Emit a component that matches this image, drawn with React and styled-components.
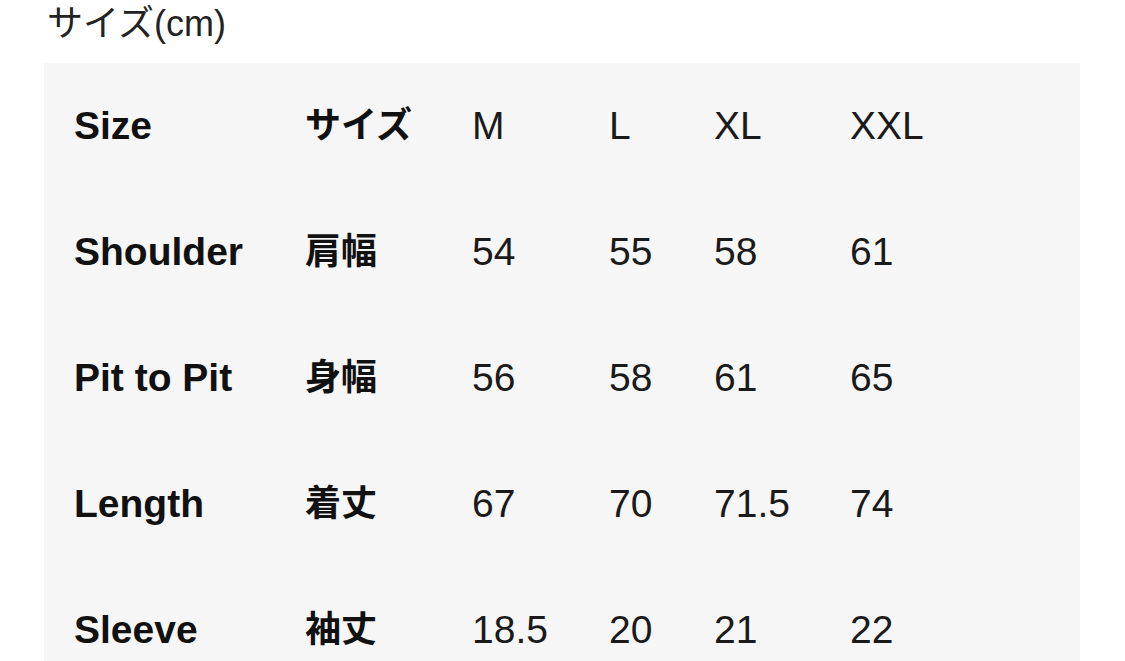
import React from "react";
import styled, { createGlobalStyle } from "styled-components";

const Global = createGlobalStyle`
  html, body { margin: 0; padding: 0; background: #ffffff; }
  body { font-family: "Liberation Sans", "Noto Sans CJK JP", sans-serif; color: #111; }
`;

const Page = styled.div`
  width: 1125px;
  height: 661px;
  overflow: hidden;
  padding: 0 45px 0 44px;
  box-sizing: border-box;
`;

const Title = styled.h2`
  margin: 0;
  padding: 3px 0 0 3px;
  height: 63px;
  box-sizing: border-box;
  font-size: 36px;
  line-height: 42px;
  font-weight: 400;
  color: #222;
  font-family: "Liberation Sans", "Noto Sans CJK JP", sans-serif;
`;

const Panel = styled.div`
  background: #f6f6f6;
  padding: 0 0 0 30px;
  height: 640px;
`;

const Table = styled.div`
  display: grid;
  grid-template-columns: 231px 167px 137px 105px 136px 1fr;
  grid-auto-rows: 126px;
`;

const Cell = styled.div`
  line-height: ${(p) => (p.$jp ? "118px" : "126px")};
  white-space: nowrap;
  font-weight: ${(p) => (p.$bold ? 700 : 400)};
  color: ${(p) => (p.$bold ? "#111" : "#1a1a1a")};
  font-family: ${(p) =>
    p.$jp
      ? `"Noto Sans CJK JP", sans-serif`
      : `"Liberation Sans", "Noto Sans CJK JP", sans-serif`};
  font-size: ${(p) => (p.$jp ? "36px" : p.$bold ? "39px" : "39px")};
`;

const rows = [
  ["Size", "サイズ", "M", "L", "XL", "XXL"],
  ["Shoulder", "肩幅", "54", "55", "58", "61"],
  ["Pit to Pit", "身幅", "56", "58", "61", "65"],
  ["Length", "着丈", "67", "70", "71.5", "74"],
  ["Sleeve", "袖丈", "18.5", "20", "21", "22"],
];

export default function App() {
  return (
    <Page>
      <Global />
      <Title>サイズ(cm)</Title>
      <Panel>
        <Table>
          {rows.map((r) => (
            <React.Fragment key={r[0]}>
              <Cell $bold>{r[0]}</Cell>
              <Cell $bold $jp>{r[1]}</Cell>
              {r.slice(2).map((v, i) => (
                <Cell key={i}>{v}</Cell>
              ))}
            </React.Fragment>
          ))}
        </Table>
      </Panel>
    </Page>
  );
}
